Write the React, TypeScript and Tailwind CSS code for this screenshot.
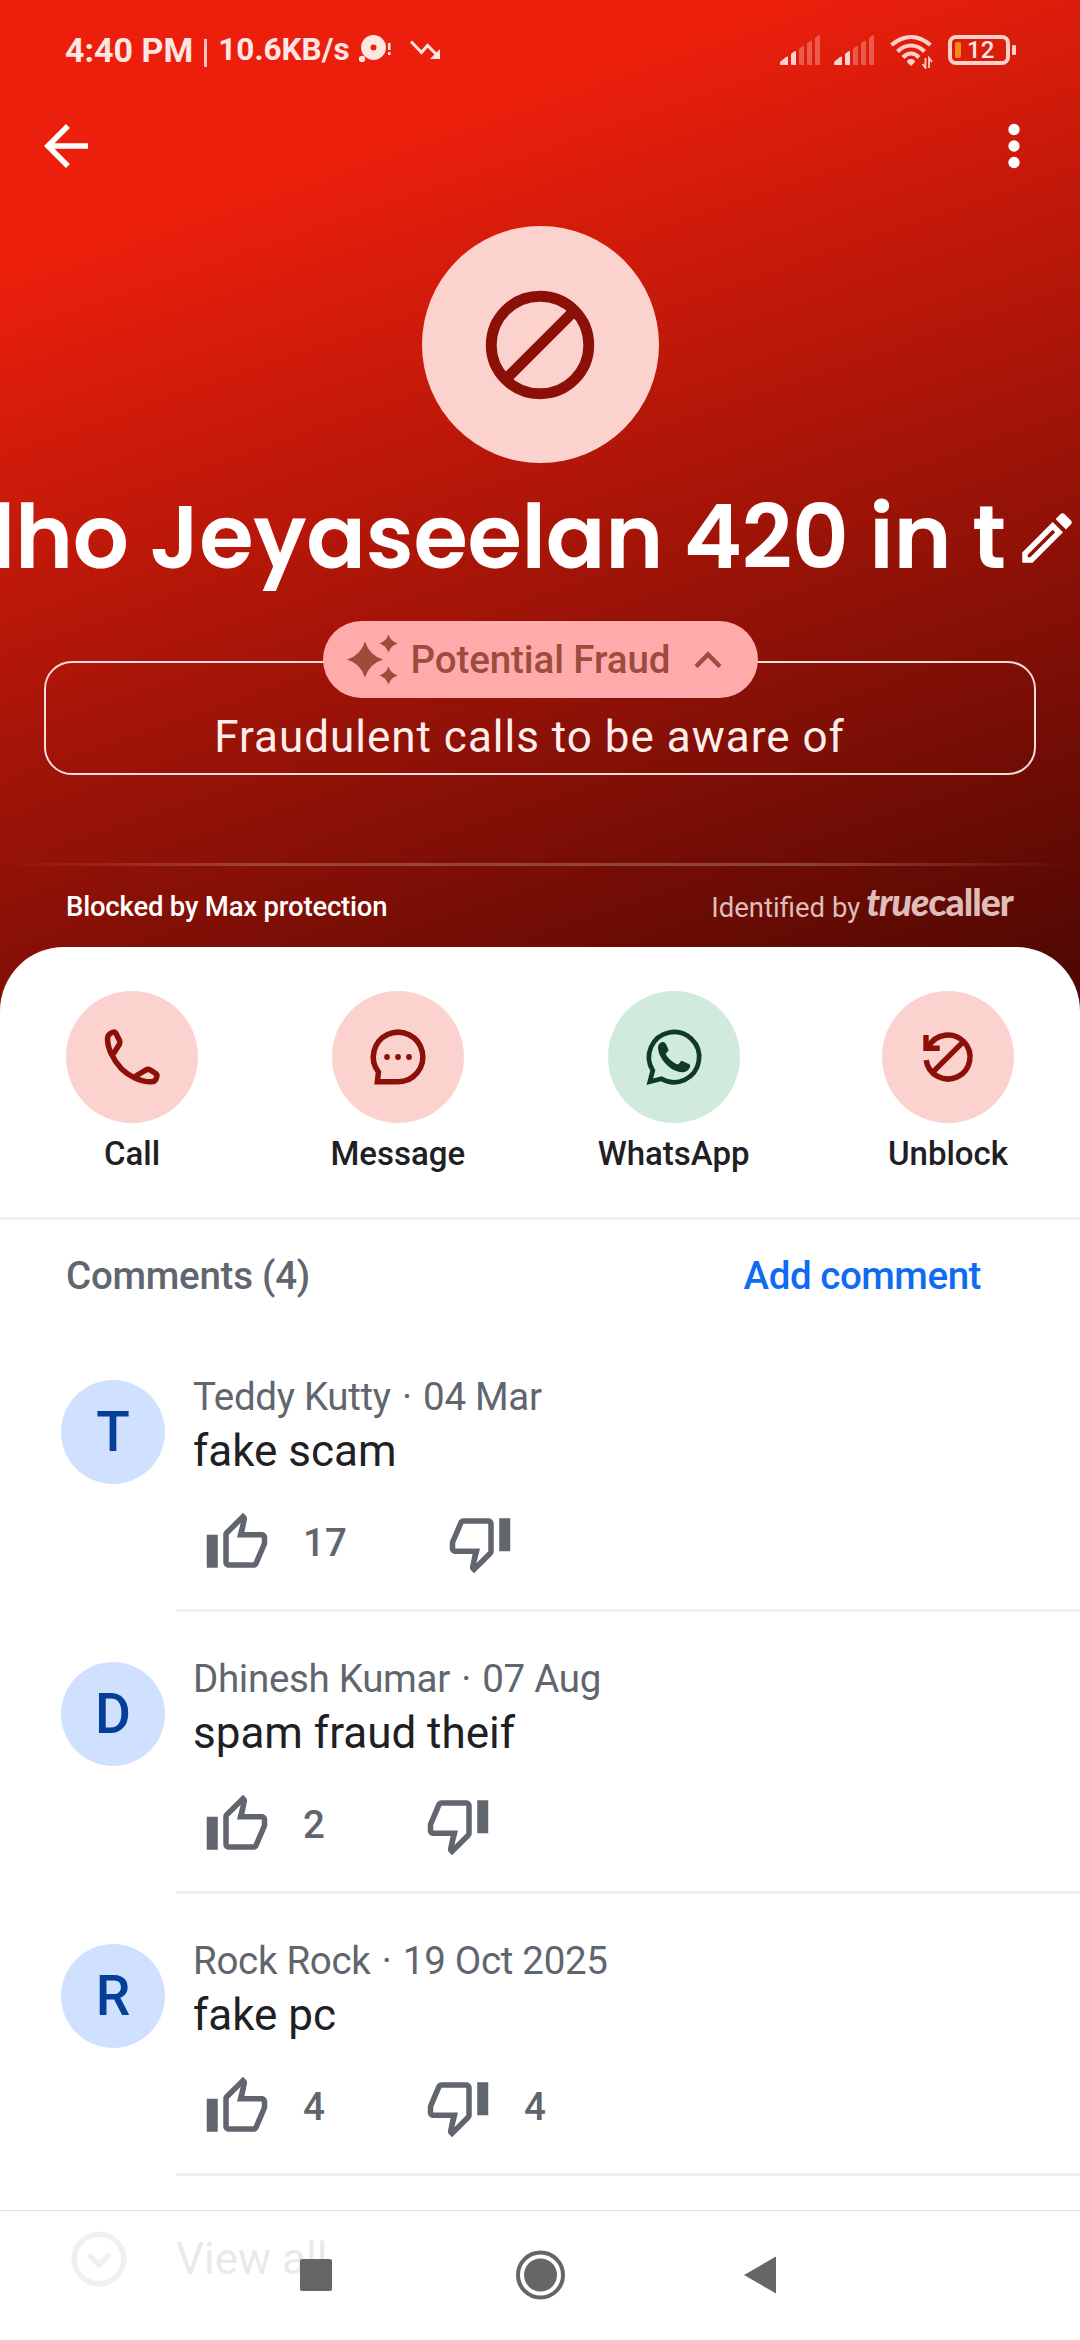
import type { ReactNode } from 'react';

interface Comment {
  author: string;
  date: string;
  text: string;
  likes: number;
  dislikes?: number;
}

const comments: Comment[] = [
  { author: 'Teddy Kutty', date: '04 Mar', text: 'fake scam', likes: 17 },
  { author: 'Dhinesh Kumar', date: '07 Aug', text: 'spam fraud theif', likes: 2 },
  { author: 'Rock Rock', date: '19 Oct 2025', text: 'fake pc', likes: 4, dislikes: 4 },
];

function SignalIcon() {
  return (
    <svg width="40" height="30" viewBox="0 0 40 30" fill="#fff">
      <path d="M0 29v-2l6-5q2-1 2 0v8H1q-1 0-1-1z" opacity=".8" />
      <path d="M11 19l3-2.500q2-1 2 0V30h-4q-1 0-1-1z" opacity=".8" />
      <path d="M19 14l3-2.500q2-1 2 0V30h-4q-1 0-1-1z" opacity=".27" />
      <path d="M27 8.500l3-2.500q2-1 2 0V30h-4q-1 0-1-1z" opacity=".27" />
      <path d="M35 3l3-2.500q2-1 2 0V30h-4q-1 0-1-1z" opacity=".27" />
    </svg>
  );
}

function StatusBar() {
  return (
    <div className="flex h-[100px] items-center pl-[65px] pr-[64px] text-[#ffe6e3]">
      <span className="text-[34px] font-bold leading-[40px]">4:40 PM</span>
      <span className="ml-[11px] h-[28px] w-[3px] translate-y-[3px] bg-[#ffc4bd]" />
      <span className="ml-[11px] text-[31.5px] font-bold leading-[40px]">10.6KB/s</span>
      <svg className="ml-[9px] -translate-y-[1px]" width="32" height="30" viewBox="0 0 32 30" fill="currentColor">
        <path fillRule="evenodd" d="M14.500 1a12.500 12.500 0 1 1 0 25 12.500 12.500 0 0 1 0-25zm0 9.500a3 3 0 1 0 0 6 3 3 0 0 0 0-6z" />
        <circle cx="3" cy="25" r="3.200" />
        <path d="M29 9h2.500v7H29zM29 18h2.500v3H29z" />
      </svg>
      <svg className="ml-[19px]" width="32" height="20" viewBox="0 0 32 20" fill="none" stroke="currentColor" strokeWidth="3">
        <path d="M1 1.500l10.500 11 6-7L27 15" />
        <path d="M30 9v10H20z" fill="currentColor" stroke="none" />
      </svg>
      <div className="ml-auto flex items-center">
        <SignalIcon />
        <span className="w-[14px]" />
        <SignalIcon />
        <svg className="ml-[16px] mt-[3px]" width="43" height="35" viewBox="0 0 43 35" fill="none" stroke="#ffcfca" strokeWidth="4.200">
          <path d="M1.500 11Q11 3 21 3t19.500 8" />
          <path d="M7.500 17.500Q13.500 11.500 21 11.500t13.500 6" />
          <path d="M13 23.500q3.500-4 8-4t8 4" />
          <path d="M17 28q0-3 4-3t4 3l-4 4z" fill="#ffcfca" stroke="none" />
          <path d="M35.500 24v10l-3-4M39 34V24l3 4" strokeWidth="1.800" />
        </svg>
        <div className="ml-[15px] flex h-[30px] w-[62px] items-center rounded-[8px] border-4 border-[#ffcfca] pl-[3px]">
          <span className="h-[16px] w-[6px] rounded-[2px] bg-[#f58a1f]" />
          <span className="ml-[6px] text-[24px] font-medium leading-[22px]">12</span>
        </div>
        <span className="ml-[2px] h-[10px] w-[4px] rounded-[1px] bg-[#ffcfca]" />
      </div>
    </div>
  );
}

function TopBar() {
  return (
    <div className="flex h-[92px] items-center justify-between px-[33px] text-white">
      <svg width="66" height="66" viewBox="0 0 24 24" fill="currentColor">
        <path d="M20 11H7.830l5.590-5.590L12 4l-8 8 8 8 1.410-1.410L7.830 13H20v-2z" />
      </svg>
      <svg width="66" height="66" viewBox="0 0 24 24" fill="currentColor">
        <circle cx="12" cy="6" r="2.050" />
        <circle cx="12" cy="12" r="2.050" />
        <circle cx="12" cy="18" r="2.050" />
      </svg>
    </div>
  );
}

function ThumbUp() {
  return (
    <svg width="66" height="66" viewBox="0 0 24 24" fill="currentColor">
      <path d="M9 21h9c.83 0 1.54-.5 1.84-1.22l3.020-7.050c.09-.23.14-.47.14-.73v-2c0-1.100-.9-2-2-2h-6.310l.95-4.570.03-.32c0-.41-.17-.79-.44-1.060L14.170 1 7.580 7.590C7.220 7.950 7 8.450 7 9v10c0 1.100.9 2 2 2zM9 9l4.340-4.340L12 10h9v2l-3 7H9V9zM1 9h4v12H1z" />
    </svg>
  );
}

function ThumbDown() {
  return (
    <svg width="66" height="66" viewBox="0 0 24 24" fill="currentColor">
      <path d="M15 3H6c-.83 0-1.540.5-1.840 1.220l-3.020 7.050c-.09.23-.14.47-.14.73v2c0 1.100.9 2 2 2h6.310l-.95 4.570-.03.32c0 .41.17.79.44 1.060L9.830 23l6.590-6.590c.36-.36.58-.86.58-1.410V5c0-1.100-.9-2-2-2zm0 12l-4.340 4.340L12 14H3v-2l3-7h9v10zm4-12h4v12h-4z" />
    </svg>
  );
}

function Action({ label, green, children }: { label: string; green?: boolean; children: ReactNode }) {
  return (
    <button className="flex flex-col items-center">
      <span
        className={
          green
            ? 'flex size-[132px] items-center justify-center rounded-full bg-[#d0ebdc] text-[#103928]'
            : 'flex size-[132px] items-center justify-center rounded-full bg-[#fbd2ce] text-[#8b1108]'
        }
      >
        <svg width="66" height="66" viewBox="0 0 24 24" fill="none" stroke="currentColor" strokeWidth="2">
          {children}
        </svg>
      </span>
      <span className="mt-[11px] text-[33px] font-medium leading-[39px] text-[#1e2024]">{label}</span>
    </button>
  );
}

function CommentRow({ comment }: { comment: Comment }) {
  return (
    <div className="flex h-[282px] pl-[61px]">
      <div className="mt-[50px] flex size-[104px] shrink-0 items-center justify-center rounded-full bg-[#cfe1ff] text-[55px] font-medium text-[#053f98]">
        {comment.author[0]}
      </div>
      <div className="ml-[11px] flex flex-1 flex-col border-b-[3px] border-[#eff0f0] pl-[17px] pt-[44px]">
        <p className="text-[38.5px] leading-[46px] tracking-[-0.3px] text-[#60656e]">
          {comment.author} <span className="mx-[2px]">·</span> {comment.date}
        </p>
        <p className="text-[44px] leading-[62px] text-[#1e2024]">{comment.text}</p>
        <div className="mt-[28px] flex items-center pl-[11px] text-[38.5px] font-medium text-[#60656e]">
          <ThumbUp />
          <span className="ml-[33px] leading-[66px]">{comment.likes}</span>
          <span className="w-[100px]" />
          <ThumbDown />
          {comment.dislikes && <span className="ml-[33px] leading-[66px]">{comment.dislikes}</span>}
        </div>
      </div>
    </div>
  );
}

export default function App() {
  return (
    <div className="relative h-[2340px] w-[1080px] overflow-hidden bg-white font-['Roboto',sans-serif]">
      <header className="h-[1014px] bg-[linear-gradient(161deg,#eb1f0c_20%,#951207_62%,#4a0702_100%)]">
        <StatusBar />
        <TopBar />

        <div className="mx-auto mt-[34px] flex size-[237px] items-center justify-center rounded-full bg-[#fbd2ce]">
          <svg width="130" height="130" viewBox="0 0 24 24" fill="none" stroke="#8b1108" strokeWidth="2">
            <circle cx="12" cy="12" r="9" />
            <path d="M5.600 18.400L18.400 5.600" />
          </svg>
        </div>

        <div className="flex h-[144px] items-center pt-[5px] text-white">
          <h1 className="flex w-[1014px] justify-end overflow-hidden whitespace-nowrap pr-[8px] font-['Poppins','Inter',sans-serif] text-[88px] font-semibold leading-[139px] tracking-[-0.25px]">
            lho Jeyaseelan 420 in t
          </h1>
          <svg width="66" height="66" viewBox="0 0 24 24" fill="currentColor">
            <path d="M14.060 9.020l.92.92L5.920 19H5v-.92l9.060-9.060M17.660 3c-.25 0-.51.1-.7.29l-1.830 1.830 3.750 3.750 1.830-1.830c.39-.39.39-1.020 0-1.410l-2.340-2.340c-.2-.2-.45-.29-.71-.29zm-3.600 3.190L3 17.250V21h3.750L17.810 9.940l-3.750-3.750z" />
          </svg>
        </div>

        <div className="relative mx-auto mt-[14px] flex h-[77px] w-[435px] items-center rounded-full bg-[#ffabab] text-[#9c4c3d]">
          <svg className="ml-[23px]" width="54" height="54" viewBox="0 0 54 54" fill="currentColor">
            <path d="M19 8.500q4.500 14 18 18-13.500 4-18 18-4.500-14-18-18 13.500-4 18-18z" />
            <path d="M42.500 1.500q2.300 6.800 9 9-6.700 2.200-9 9-2.300-6.800-9-9 6.700-2.200 9-9z" />
            <path d="M42.500 33.500q2.300 6.800 9 9-6.700 2.200-9 9-2.300-6.800-9-9 6.700-2.200 9-9z" />
          </svg>
          <span className="ml-[11px] text-[38.5px] font-medium leading-[46px] tracking-[-0.1px]">Potential Fraud</span>
          <svg className="ml-auto mr-[35px]" width="30" height="20" viewBox="0 0 30 20" fill="none" stroke="currentColor" strokeWidth="4.500">
            <path d="M3 16.500L15 4.500l12 12" />
          </svg>
        </div>
        <div className="mx-[44px] -mt-[37px] flex h-[114px] items-end justify-center rounded-[28px] border-2 border-[#f6dcda] pb-[10px] pr-[21px]">
          <span className="text-[44px] leading-[52px] tracking-[1px] text-[#ffeeec]">Fraudulent calls to be aware of</span>
        </div>

        <div className="mt-[88px] h-[3px] bg-[linear-gradient(90deg,transparent,rgba(255,255,255,0.22)_25%,rgba(255,255,255,0.22)_75%,transparent)]" />
        <div className="flex h-[81px] items-center justify-between px-[66px] text-[27.5px]">
          <span className="font-medium tracking-[-0.2px] text-white">Blocked by Max protection</span>
          <span className="flex items-center text-[#dfbdba]">
            <span className="mt-[2px]">Identified by</span>
            <span className="-mt-[9px] ml-[6px] mr-[1px] font-['Lato',sans-serif] text-[37.5px] font-black leading-[40px] tracking-[-1px]">
              <i>true</i>caller
            </span>
          </span>
        </div>
      </header>

      <main className="relative -mt-[67px] rounded-t-[64px] bg-white">
        <div className="flex justify-between border-b-[3px] border-[#f0f0f1] px-[66px] pb-[44px] pt-[44px]">
          <Action label="Call">
            <path d="M4.600 11.200C3.500 9 3.100 7.200 3.100 5.400 3.100 4.500 3.500 3.800 4.200 3.400L4.900 3.050C5.400 2.800 5.900 2.950 6.150 3.400L7.500 6.100C7.700 6.500 7.650 6.900 7.450 7.300L5.200 10.900" />
            <path d="M4.500 10.900C6.200 14.600 9.200 18 13.200 19.700" />
            <path d="M13 19.600C15.200 20.600 17 21 18.800 21 19.700 21.150 20.200 20.900 20.700 20.100L21 19.200C21.200 18.700 21.100 18.400 20.700 18.050L18.600 16.700C18.100 16.450 17.600 16.400 17 16.750L13.200 19" />
          </Action>
          <Action label="Message">
            <path d="M12 21a9 9 0 1 0-7.100-3.500L4.500 21z" />
            <g fill="currentColor" stroke="none">
              <circle cx="8" cy="12" r="1.050" />
              <circle cx="12" cy="12" r="1.050" />
              <circle cx="16" cy="12" r="1.050" />
            </g>
          </Action>
          <Action label="WhatsApp" green>
            <path strokeWidth="1.700" d="M7.400 19.900L3.200 21l1.100-4.100a9.130 9.130 0 1 1 3.100 3z" />
            <path
              fill="currentColor"
              stroke="none"
              d="M6.200 8.600c0-.8.300-1.400.8-1.700.6-.5 1.500-.4 1.900.2.500.7.700 1.500 1.100 2.200.1.600-.7 1-1 1.600.8 1.600 2.600 3.200 4.400 3.800.6-.1.800-1.100 1.400-1.300l2.800 1.200c.4.300.3.900.1 1.300-.4.900-1.300 1.500-2.300 1.600-1.500.1-3.600-.6-5.300-2-2-1.700-3.900-4.400-3.900-6.900z"
            />
          </Action>
          <Action label="Unblock">
            <path d="M4.070 13.100A8 8 0 1 0 4.900 8.300M6.300 17.700L17.700 6.300" />
            <path strokeWidth="1.950" d="M4 4v4.800h5" />
          </Action>
        </div>

        <div className="flex h-[110px] items-center justify-between pl-[66px] pr-[99px] pt-[2px] text-[38.5px] font-medium">
          <h2 className="tracking-[-0.25px] text-[#60656e]">Comments (4)</h2>
          <button className="tracking-[-0.45px] text-[#0f6cf2]">Add comment</button>
        </div>

        {comments.map((comment) => (
          <CommentRow key={comment.author} comment={comment} />
        ))}

        <div className="flex h-[166px] items-center pl-[66px] text-[44px] text-[#1e2024]">
          <svg width="66" height="66" viewBox="0 0 24 24" fill="none" stroke="#60656e" strokeWidth="2">
            <circle cx="12" cy="12" r="9" />
            <path d="M8.200 10.400l3.800 3.800 3.800-3.800" />
          </svg>
          <span className="ml-[44px]">View all</span>
        </div>
      </main>

      {/* system navigation, floats over the list */}
      <nav className="absolute bottom-0 left-0 h-[130px] w-full border-t border-[#e0e0e0] bg-white/90">
        <svg width="1080" height="129" viewBox="0 0 1080 129" fill="#666">
          <rect x="300" y="48" width="32" height="32" rx="2" />
          <circle cx="540.500" cy="64" r="22.500" fill="none" stroke="#666" strokeWidth="4" />
          <circle cx="540.500" cy="64" r="16.500" />
          <path d="M776 45.500v37L744 64z" />
        </svg>
      </nav>
    </div>
  );
}
